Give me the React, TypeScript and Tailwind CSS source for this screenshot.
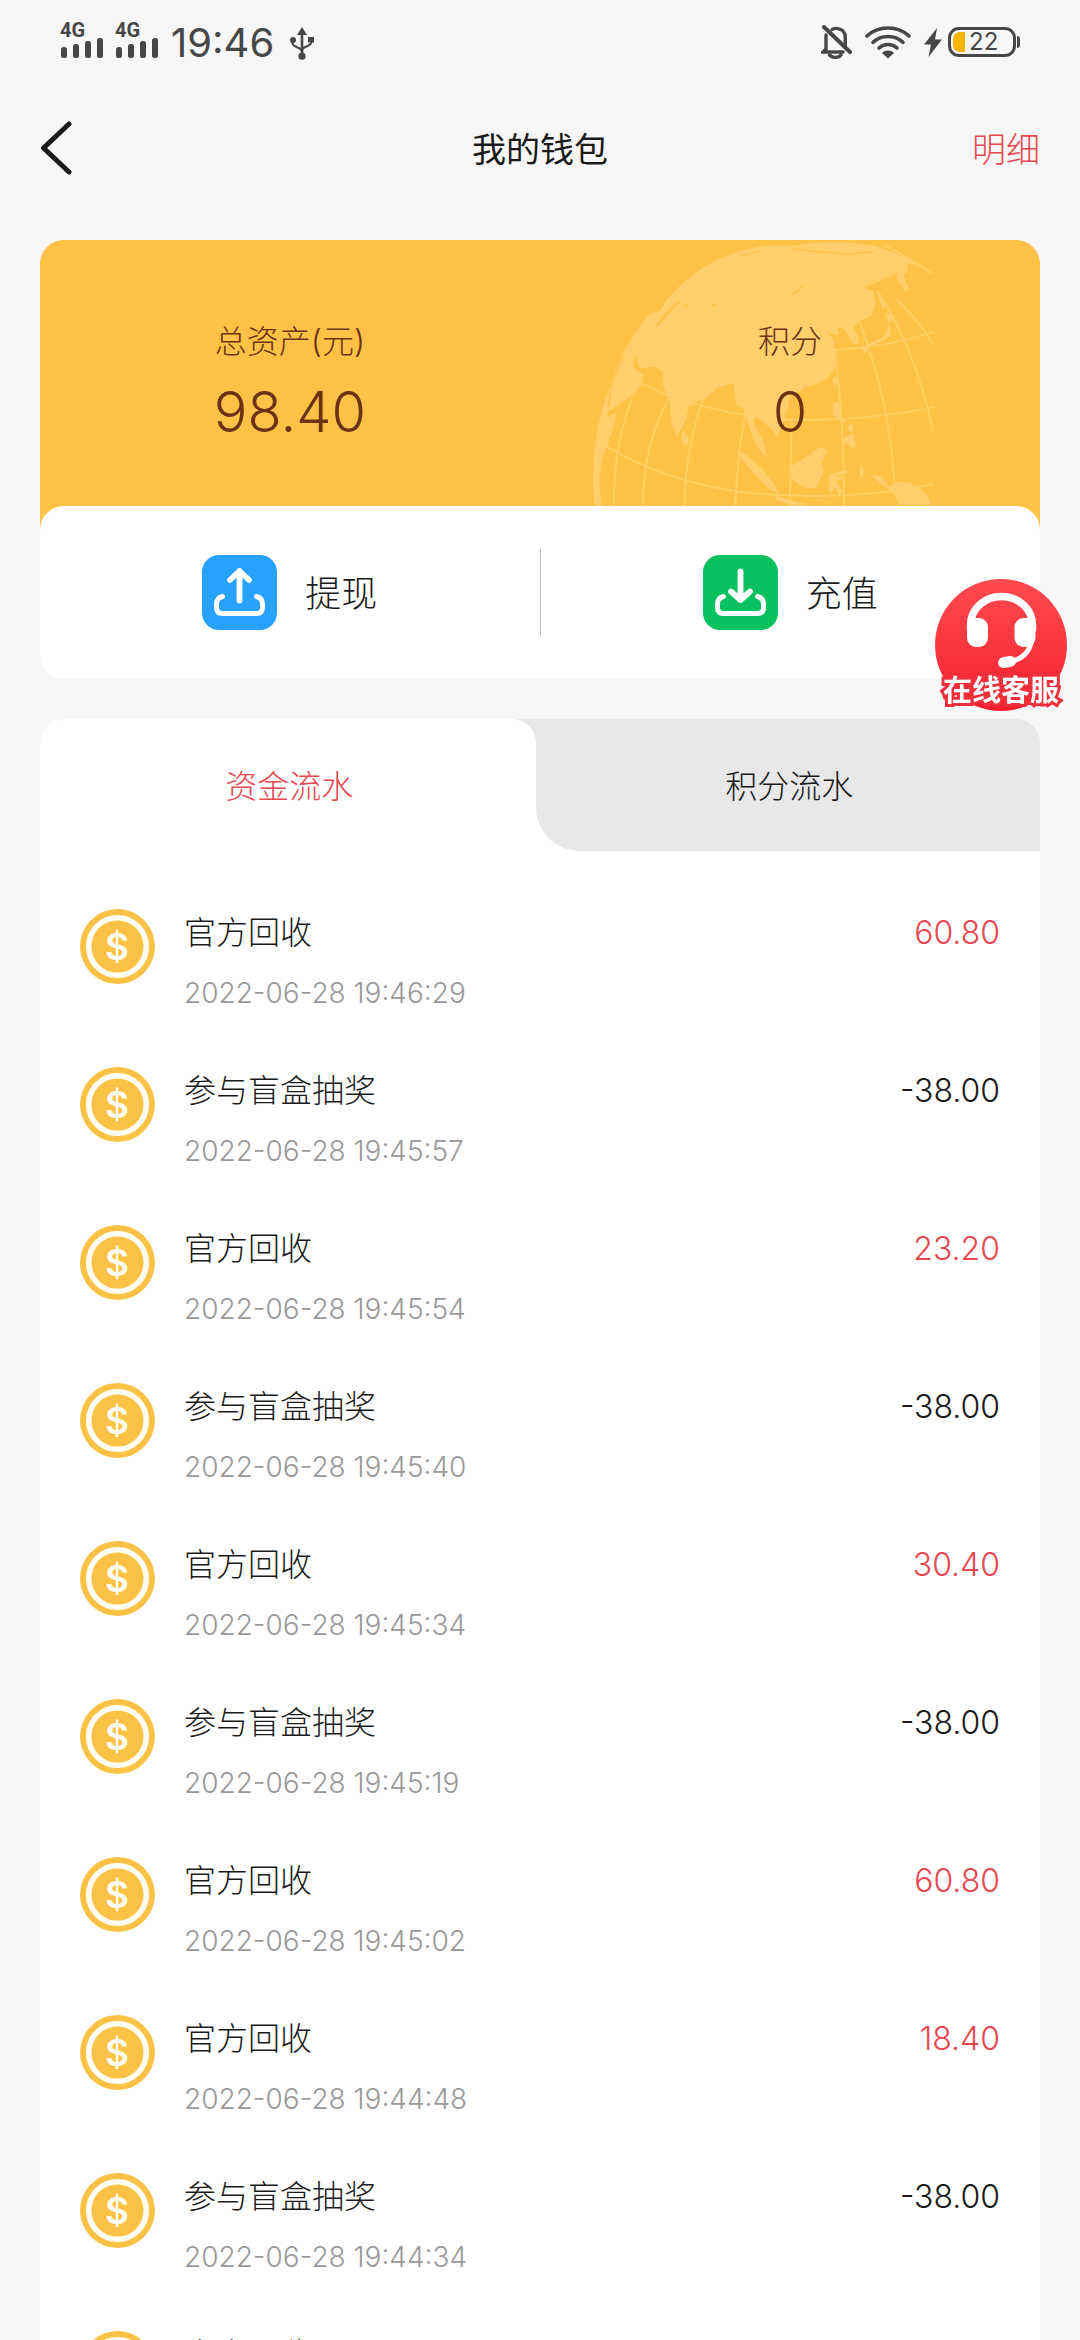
import React, { useState } from "react";

type Entry = { title: string; date?: string; amount?: string };

const RECOVERY = "官方回收";
const DRAW = "参与盲盒抽奖";

const ENTRIES: Entry[] = [
  { title: RECOVERY, date: "2022-06-28 19:46:29", amount: "60.80" },
  { title: DRAW, date: "2022-06-28 19:45:57", amount: "-38.00" },
  { title: RECOVERY, date: "2022-06-28 19:45:54", amount: "23.20" },
  { title: DRAW, date: "2022-06-28 19:45:40", amount: "-38.00" },
  { title: RECOVERY, date: "2022-06-28 19:45:34", amount: "30.40" },
  { title: DRAW, date: "2022-06-28 19:45:19", amount: "-38.00" },
  { title: RECOVERY, date: "2022-06-28 19:45:02", amount: "60.80" },
  { title: RECOVERY, date: "2022-06-28 19:44:48", amount: "18.40" },
  { title: DRAW, date: "2022-06-28 19:44:34", amount: "-38.00" },
  { title: RECOVERY },
];

function Signal() {
  return (
    <div className="flex w-[43px] flex-col">
      <span className="h-4 font-['Roboto',sans-serif] text-[20px] leading-4 font-bold">4G</span>
      <svg viewBox="0 0 43 20" className="h-5 w-[43px]" fill="currentColor" aria-hidden="true">
        <rect x="1" y="9" width="6" height="11" rx="2.5" />
        <rect x="13" y="6" width="6" height="14" rx="2.5" />
        <rect x="25" y="3" width="6" height="17" rx="2.5" />
        <rect x="37" y="0" width="6" height="20" rx="2.5" />
      </svg>
    </div>
  );
}

function UsbIcon() {
  return (
    <svg viewBox="0 0 24 33" className="h-[33px] w-6" fill="none" stroke="currentColor" strokeWidth="2.2" aria-hidden="true">
      <path d="M12 5v22" strokeWidth="2.6" />
      <path d="M2.6 13v3c0 5 9.400 4 9.400 8.500M21.400 13v2c0 5-9.400 4-9.400 8.500" />
      <path d="M12 0l5 8H7z" fill="currentColor" stroke="none" />
      <circle cx="3" cy="13" r="3" fill="currentColor" stroke="none" />
      <rect x="18" y="10" width="6" height="5.500" fill="currentColor" stroke="none" />
      <circle cx="12" cy="29.200" r="3.600" fill="currentColor" stroke="none" />
    </svg>
  );
}

function BellOffIcon() {
  return (
    <svg viewBox="0 0 31 34" className="h-[34px] w-[31px]" fill="none" stroke="currentColor" strokeWidth="3.4" strokeLinecap="round" aria-hidden="true">
      <path d="M5 10v14l-3 3h20" />
      <path d="M11 4.500c2-1 4-1.400 6-.8 5 .9 7.300 4.500 7.300 9v8" />
      <path d="M8.500 30c3 3.300 9 3.300 11.500 0" />
      <path d="M3 2l26 25" strokeWidth="4" />
    </svg>
  );
}

function WifiIcon() {
  return (
    <svg viewBox="0 0 46 33" className="h-[33px] w-[46px]" fill="none" stroke="currentColor" strokeWidth="3.6" strokeLinecap="round" aria-hidden="true">
      <path d="M2 10C13-.7 33-.7 44 10" />
      <path d="M8 16.300c8.500-7.800 21.500-7.800 30 0" />
      <path d="M14 22c5-4.600 13-4.600 18 0" />
      <path d="M17 27c3-3.300 9-3.300 12 0l-6 5.500z" fill="currentColor" stroke="none" />
    </svg>
  );
}

function BatteryIcon() {
  return (
    <div className="flex items-center">
      <svg viewBox="0 0 18 29" className="mr-1.5 h-[29px] w-[18px]" fill="currentColor" aria-hidden="true">
        <path d="M13 0L0 16.500h7L4.500 29 18 11.500h-7z" />
      </svg>
      <div className="flex h-[30px] w-[68px] items-center rounded-[11px] border-3 border-current pl-[2px]">
        <span className="h-5 w-3 rounded-l-[7px] bg-[#fbb400]" />
        <span className="pl-1 text-[24px] leading-6 font-normal">22</span>
      </div>
      <span className="ml-px h-3 w-[3px] rounded-r-full bg-current" />
    </div>
  );
}

function Globe() {
  return (
    <svg
      viewBox="90 60 1050 798"
      className="pointer-events-none absolute top-0 right-[100px] h-[266px] w-[350px]"
      aria-hidden="true"
    >
      <g fill="none" stroke="#ffcf63" strokeWidth="6">
        <path d="M240 488L330 530C520 590 640 600 740 600C890 600 1010 585 1122 562" />
        <path d="M140 680C250 745 400 800 560 818C720 835 860 828 985 815L1122 792" />
        <path d="M822 390C940 385 1030 365 1122 335" />
        <path d="M910 200L1005 162M970 75C1020 98 1070 128 1115 160" />
        <path d="M232 500C190 590 160 700 162 858" />
        <path d="M328 530C275 630 248 740 248 858" />
        <path d="M432 530C395 630 375 750 374 858" />
        <path d="M560 570C538 660 530 760 526 858" />
        <path d="M695 600L690 858M828 420C845 560 852 700 852 858" />
        <path d="M900 310C960 470 995 640 1003 790" />
        <path d="M950 210C1030 330 1085 470 1118 632" />
        <path d="M1010 240C1050 275 1090 325 1118 372" />
      </g>
      <g fill="#ffcf6c">
        <path d="M104 858C90 740 105 610 150 500C170 430 210 350 270 280L300 272C340 200 430 130 520 100C580 78 640 74 690 78C760 66 850 62 930 75C980 86 1030 108 1070 134L1040 130L1044 152L1030 165L1046 205L1036 216L1012 180L1010 158C970 170 930 185 905 202L940 212L948 250L935 285L900 305L880 322L893 345L896 372L880 372L866 350L852 326L832 322L838 345L808 340L795 326L820 360L822 385L832 405L826 440C810 480 770 495 735 500L720 515L690 520L685 560L665 620L650 650L636 628L606 604L590 590L580 602L596 640L610 660L622 712L605 700L578 655L566 615L550 565L530 560L520 490L500 495L470 505L440 535L410 545L385 560L378 600L350 650L335 610L328 540L310 500L308 455L285 440L240 445L225 405L220 440L250 465L245 495L210 530L145 575L140 590L170 578L160 625L140 680C118 730 114 790 125 858Z" />
        <path d="M366 628L384 650L386 670L372 678L364 660Z" />
        <path d="M530 690L560 705L610 750L645 795L655 820L630 808L580 760L540 710Z" />
        <path d="M645 825C680 838 710 846 740 853V858H700L650 840Z" />
        <path d="M695 738L740 710L780 682L803 690L785 730L792 750L770 803L735 805L700 782L688 750Z" />
        <path d="M808 762L860 750L862 760L824 768L850 772L830 785L848 815L838 825L824 800L815 822L806 810Z" />
        <path d="M930 762L965 770L985 800L1010 785L1050 790L1100 820L1112 855H1015L1005 825L980 805L955 785Z" />
        <path d="M818 475L828 470L832 492L820 498ZM820 548L836 545L842 590L860 605L845 608L818 582ZM850 655L880 640L888 680L872 684L864 668L850 678ZM862 615L878 612L880 634L868 636ZM902 735L910 745L908 778L900 765Z" />
        <path d="M975 278L1004 288L996 300L985 310L994 345L975 360L930 378L915 402L905 385L925 372L970 350L982 330L985 305Z" />
        <path d="M950 212L962 222L978 262L968 268Z" />
      </g>
      <g fill="none" stroke="#ffc247" strokeWidth="7" strokeLinecap="round">
        <path d="M690 84C740 96 800 96 860 102L940 96" strokeWidth="4" />
        <path d="M550 106L600 94" strokeWidth="4" />
        <path d="M292 316C315 290 335 260 356 247" />
        <path d="M374 260L382 254M458 254H466M700 222L728 200" strokeWidth="5" />
        <path d="M146 560C148 500 170 450 190 410" strokeWidth="4" />
      </g>
    </svg>
  );
}

function TransferIcon({ kind }: { kind: "out" | "in" }) {
  return (
    <svg viewBox="0 0 75 75" className="size-[75px] shrink-0" fill="none" stroke="#fff" strokeLinecap="round" strokeLinejoin="round" aria-hidden="true">
      <rect width="75" height="75" rx="17" fill={kind === "out" ? "#27a2ff" : "#0ac160"} stroke="none" />
      {kind === "out" ? (
        <path d="M37.500 45.500V16M28 25l9.500-9L47 25" strokeWidth="5.800" />
      ) : (
        <path d="M37.500 16.500V45M28 36.500l9.500 8.500 9.500-8.500" strokeWidth="5.800" />
      )}
      <path d="M20.500 41.500Q14.500 43 14.500 49V52.500Q14.500 58.500 20.500 58.500H54.500Q60.500 58.500 60.500 52.500V49Q60.500 43 54.500 41.500" strokeWidth="5" />
    </svg>
  );
}

function CoinIcon() {
  return (
    <svg viewBox="0 0 75 75" className="size-[75px] shrink-0" aria-hidden="true">
      <circle cx="37.500" cy="37.500" r="37.500" fill="#fbc245" />
      <circle cx="37.500" cy="37.500" r="28.800" fill="none" stroke="#fffdf3" strokeWidth="5.600" />
      <text x="37" y="51" textAnchor="middle" fill="#fffdf3" fontSize="37" fontWeight="600" fontFamily="Inter, sans-serif">
        $
      </text>
    </svg>
  );
}

function ServiceButton() {
  return (
    <button
      type="button"
      className="fixed top-[579px] right-[13px] flex size-[132px] flex-col items-center justify-end rounded-full bg-linear-to-b from-[#ff4a50] to-[#f4192c] pb-0.5"
    >
      <svg viewBox="0 0 132 96" className="absolute top-0 left-0 h-24 w-[132px]" fill="none" stroke="#fff" strokeLinecap="round" aria-hidden="true">
        <path d="M35.500 50V46a31 28.500 0 0 1 62 0v4" strokeWidth="7.500" />
        <rect x="32" y="39" width="21" height="29" rx="9" fill="#fff" stroke="none" />
        <rect x="79.500" y="39" width="21" height="29" rx="9" fill="#fff" stroke="none" />
        <path d="M96 64C94 73 87 80 77 82" strokeWidth="5" />
        <rect x="63" y="77.500" width="18" height="11" rx="5.500" fill="#fff" stroke="none" transform="rotate(-10 72 83)" />
      </svg>
      <span className="relative text-[29px] leading-9 font-bold whitespace-nowrap text-white [-webkit-text-stroke:6px_#ee2f3c] [paint-order:stroke_fill]">
        在线客服
      </span>
    </button>
  );
}

export default function App() {
  const [tab, setTab] = useState<"funds" | "points">("funds");
  const funds = tab === "funds";

  return (
    <div className="h-screen overflow-x-hidden overflow-y-auto bg-[#f7f7f7] font-['Inter','Noto_Sans_CJK_SC',sans-serif] font-light text-[#1a1a1a] [scrollbar-width:none]">
      <div className="flex h-[84px] items-center justify-between px-[60px] text-[#474747]">
        <div className="flex items-center pt-0.5">
          <div className="flex gap-3 pb-1.5">
            <Signal />
            <Signal />
          </div>
          <span className="pr-4 pl-[13px] text-[40px] leading-[48px] font-normal">19:46</span>
          <UsbIcon />
        </div>
        <div className="flex items-center gap-[13px]">
          <BellOffIcon />
          <WifiIcon />
          <BatteryIcon />
        </div>
      </div>

      <header className="grid h-32 grid-cols-3 items-center px-10">
        <button type="button" aria-label="返回" className="justify-self-start">
          <svg viewBox="0 0 32 56" className="h-14 w-8" fill="none" stroke="#1a1a1a" strokeWidth="5" strokeLinecap="round" strokeLinejoin="round" aria-hidden="true">
            <path d="M29 4L3.500 28 29 52" />
          </svg>
        </button>
        <h1 className="pt-1 text-center text-[34px] leading-[48px] font-normal">我的钱包</h1>
        <a href="#details" className="justify-self-end pt-1 text-[34px] leading-[48px] text-[#e5484f]">
          明细
        </a>
      </header>

      <main className="px-10 pt-7">
        <section className="relative rounded-t-3xl bg-[#ffc247]">
          <Globe />
          <dl className="relative grid h-[266px] grid-cols-2 pt-[78px] text-center text-[#6b3216]">
            <div>
              <dt className="text-[32px] leading-[48px]">总资产(元)</dt>
              <dd className="pt-2.5 text-[56px] leading-[72px]">98.40</dd>
            </div>
            <div>
              <dt className="text-[32px] leading-[48px]">积分</dt>
              <dd className="pt-2.5 text-[56px] leading-[72px]">0</dd>
            </div>
          </dl>
        </section>

        <div className="bg-linear-to-b from-[#ffc247] from-[24px] to-[#f7f7f7] to-[24px]">
          <div className="flex h-[173px] items-center rounded-3xl bg-white text-[36px]">
            <button type="button" className="flex flex-1 items-center justify-center gap-7">
              <TransferIcon kind="out" />
              <span className="pt-0.5">提现</span>
            </button>
            <span className="h-[88px] w-px bg-[#bdbdbd]" />
            <button type="button" className="flex flex-1 items-center justify-center gap-7">
              <TransferIcon kind="in" />
              <span className="pt-0.5">充值</span>
            </button>
          </div>
        </div>

        <section className="mt-10 overflow-hidden rounded-t-3xl bg-white">
          <div role="tablist" className="flex h-[132px] text-[32px]">
            <div className="flex flex-[497] bg-[#e8e8e8]">
              <button
                type="button"
                role="tab"
                aria-selected={funds}
                onClick={() => setTab("funds")}
                className={funds ? "flex-1 rounded-tr-3xl bg-white pt-[3px] pl-[3px] text-[#e5484f]" : "flex-1 pt-[3px] pl-[3px]"}
              >
                资金流水
              </button>
            </div>
            <button
              type="button"
              role="tab"
              aria-selected={!funds}
              onClick={() => setTab("points")}
              className={
                funds
                  ? "flex-[503] rounded-bl-[44px] bg-[#e8e8e8] pt-[3px] pl-[3px]"
                  : "flex-[503] rounded-tl-3xl bg-white pt-[3px] pl-[3px] text-[#e5484f]"
              }
            >
              积分流水
            </button>
          </div>
          <ul className="flex flex-col gap-[54px] px-10 pt-[58px] pb-10">
            {ENTRIES.map((entry, index) => (
              <li key={index} className="flex items-start">
                <CoinIcon />
                <div className="flex flex-1 flex-col gap-4 pl-[29px]">
                  <span className="text-[32px] leading-12">{entry.title}</span>
                  {entry.date && (
                    <time className="text-[28px] leading-10 text-[#999999] [font-feature-settings:'case']">{entry.date}</time>
                  )}
                </div>
                {entry.amount && (
                  <span
                    className={
                      entry.amount.startsWith("-")
                        ? "text-[32px] leading-12 [font-feature-settings:'case']"
                        : "text-[32px] leading-12 text-[#e5484f]"
                    }
                  >
                    {entry.amount}
                  </span>
                )}
              </li>
            ))}
          </ul>
        </section>
      </main>
      <ServiceButton />
    </div>
  );
}
